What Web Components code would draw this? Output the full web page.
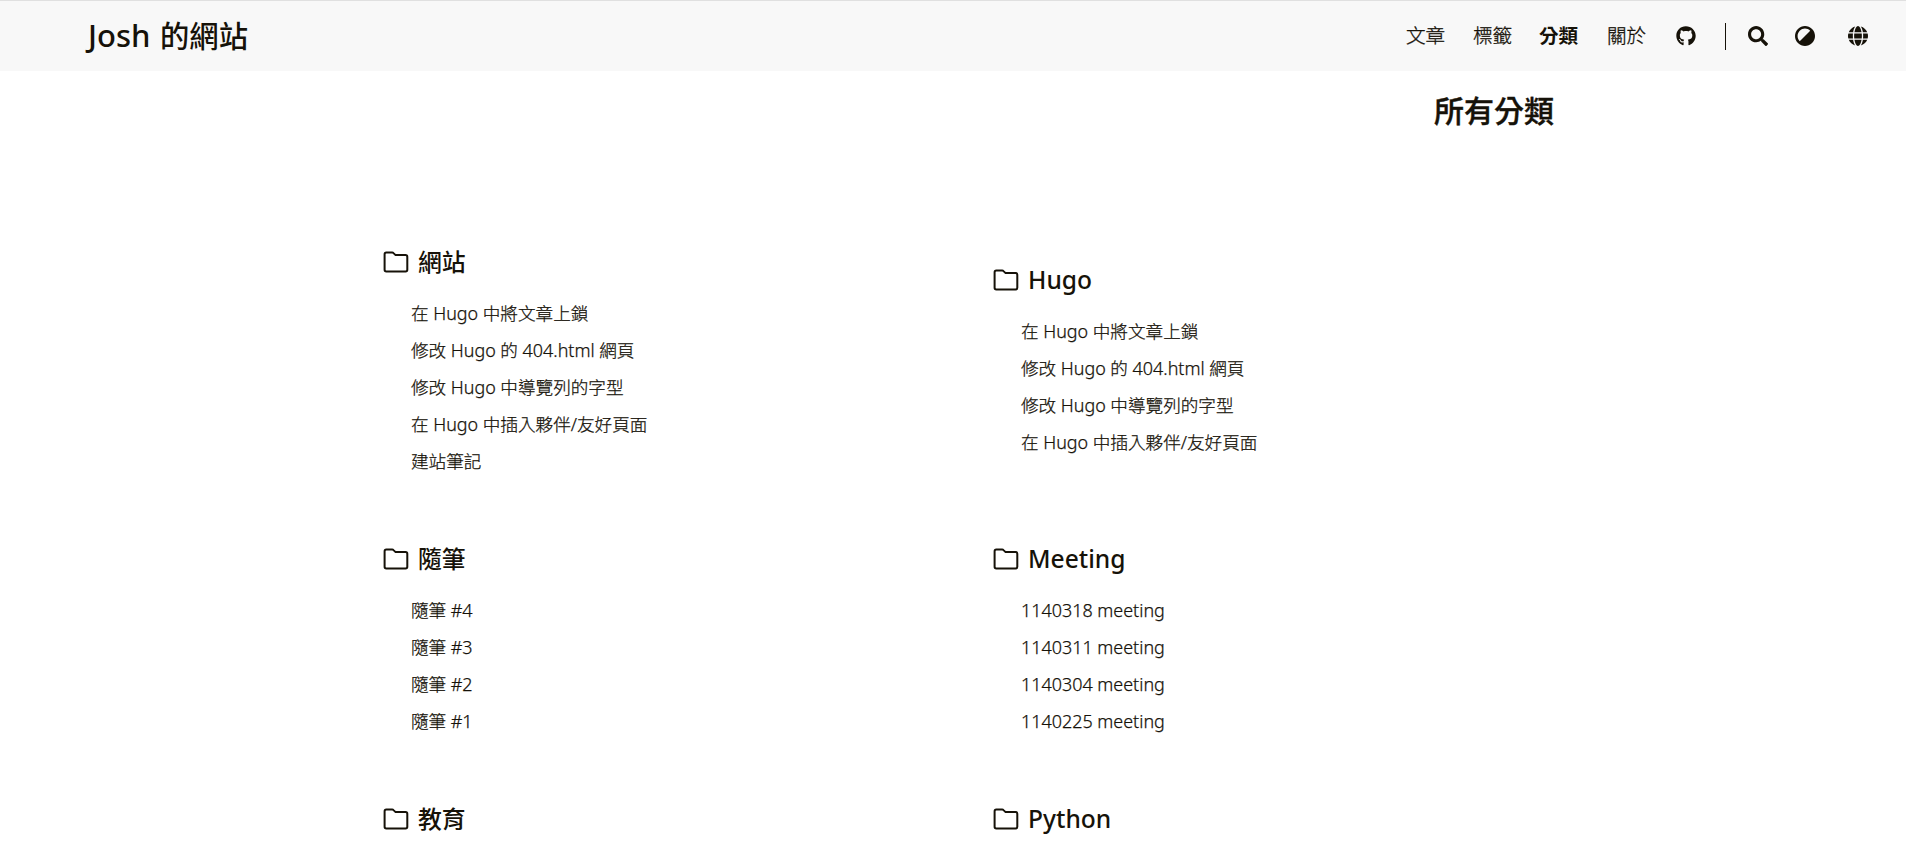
<!DOCTYPE html>
<html lang="zh-Hant">
<head>
<meta charset="utf-8">
<title>所有分類 - Josh 的網站</title>
<style>
  body { margin: 0; height: 858px; overflow: hidden; background: #fff; color: #161209; font-family: "Noto Sans", "Noto Sans CJK TC", sans-serif; }
</style>
</head>
<body>
<site-header>
  <span slot="brand"><latin-run style="--size:31px;margin-right:2px">Josh</latin-run> 的網站</span>
  <nav-link>文章</nav-link>
  <nav-link>標籤</nav-link>
  <nav-link active>分類</nav-link>
  <nav-link>關於</nav-link>
</site-header>
<page-title>所有分類</page-title>
<category-grid></category-grid>

<script>
const define = (name, html, setup) => customElements.define(name, class extends HTMLElement {
  constructor() {
    super();
    const t = document.createElement('template');
    t.innerHTML = html;
    this.attachShadow({ mode: 'open' }).append(t.content.cloneNode(true));
  }
  connectedCallback() { if (setup) setup(this); }
});

define('latin-run', `<style>:host{display:inline;font-size:var(--size,1.033em)}</style><slot></slot>`);

define('nav-link', `<style>
  :host{display:block;font-size:19.6px;font-weight:300;-webkit-text-stroke:.3px;line-height:30px;width:40px;white-space:nowrap}
  :host([active]){font-weight:700;-webkit-text-stroke:0;position:static;text-indent:-1px}
</style><slot></slot>`);

const icons = {
  github: ['0 0 496 512', '<path d="M165.9 397.4c0 2-2.3 3.6-5.2 3.6-3.3.3-5.6-1.3-5.6-3.6 0-2 2.3-3.6 5.2-3.6 3-.3 5.6 1.3 5.6 3.6zm-31.1-4.5c-.7 2 1.3 4.3 4.3 4.9 2.6 1 5.6 0 6.2-2s-1.3-4.3-4.3-5.2c-2.6-.7-5.5.3-6.2 2.3zm44.2-1.7c-2.9.7-4.9 2.6-4.6 4.9.3 2 2.9 3.3 5.9 2.6 2.9-.7 4.9-2.6 4.6-4.6-.3-1.9-3-3.2-5.9-2.9zM244.8 8C106.1 8 0 113.3 0 252c0 110.9 69.8 205.8 169.5 239.2 12.8 2.3 17.3-5.6 17.3-12.1 0-6.2-.3-40.4-.3-61.4 0 0-70 15-84.7-29.8 0 0-11.4-29.1-27.8-36.6 0 0-22.9-15.7 1.6-15.4 0 0 24.9 2 38.6 25.8 21.9 38.6 58.6 27.5 72.9 20.9 2.3-16 8.8-27.1 16-33.7-55.9-6.2-112.3-14.3-112.3-110.5 0-27.5 7.6-41.3 23.6-58.9-2.6-6.5-11.1-33.3 2.6-67.9 20.9-6.5 69 27 69 27 20-5.6 41.5-8.5 62.8-8.5s42.8 2.9 62.8 8.5c0 0 48.1-33.6 69-27 13.7 34.7 5.2 61.4 2.6 67.9 16 17.7 25.8 31.5 25.8 58.9 0 96.5-58.9 104.2-114.8 110.5 9.2 7.9 17 22.9 17 46.4 0 33.7-.3 75.4-.3 83.6 0 6.5 4.6 14.4 17.3 12.1C428.2 457.8 496 362.9 496 252 496 113.3 383.5 8 244.8 8z"/>'],
  search: ['0 0 512 512', '<path d="M505 442.7L405.3 343c-4.5-4.5-10.6-7-17-7H372c27.6-35.3 44-79.7 44-128C416 93.1 322.9 0 208 0S0 93.1 0 208s93.1 208 208 208c48.3 0 92.7-16.4 128-44v16.3c0 6.4 2.5 12.5 7 17l99.7 99.7c9.4 9.4 24.6 9.4 33.9 0l28.3-28.3c9.4-9.4 9.4-24.6.1-34zM208 336c-70.7 0-128-57.2-128-128 0-70.7 57.2-128 128-128 70.7 0 128 57.2 128 128 0 70.7-57.2 128-128 128z"/>'],
  contrast: ['8 8 496 496', '<path d="M8 256c0 136.966 111.033 248 248 248s248-111.034 248-248S392.966 8 256 8 8 119.033 8 256zm248 184V72c101.705 0 184 82.311 184 184 0 101.705-82.311 184-184 184z" transform="rotate(225 256 256)"/>'],
  globe: ['0 8 496 496', '<path d="M336.5 160C322 70.7 287.8 8 248 8s-74 62.7-88.5 152h177zM152 256c0 22.2 1.2 43.5 3.3 64h185.3c2.1-20.5 3.3-41.8 3.3-64s-1.2-43.5-3.3-64H155.3c-2.1 20.5-3.3 41.8-3.3 64zm324.7-96c-28.6-67.9-86.5-120.4-158-141.6 24.4 33.8 41.2 84.7 50 141.6h108zM177.2 18.4C105.8 39.6 47.8 92.1 19.3 160h108c8.7-56.9 25.5-107.8 49.9-141.6zM487.4 192H372.7c2.1 21 3.3 42.5 3.3 64s-1.2 43-3.3 64h114.6c5.5-20.5 8.6-41.8 8.6-64s-3.1-43.5-8.5-64zM120 256c0-21.5 1.2-43 3.3-64H8.6C3.2 212.5 0 233.8 0 256s3.2 43.5 8.6 64h114.6c-2-21-3.2-42.5-3.2-64zm39.5 96c14.5 89.3 48.7 152 88.5 152s74-62.7 88.5-152h-177zm159.3 141.6c71.4-21.2 129.4-73.7 158-141.6h-108c-8.8 56.9-25.6 107.8-50 141.6zM19.3 352c28.6 67.9 86.5 120.4 158 141.6-24.4-33.8-41.2-84.7-50-141.6h-108z"/>'],
  folder: ['0 0 26 22', '<path fill="none" stroke="currentColor" stroke-width="2" stroke-linejoin="round" d="M3.3 1.5H9.2Q10 1.5 10.5 2.1L12.6 4.1H22.6Q24.3 4.1 24.3 5.8V18.8Q24.3 20.5 22.6 20.5H3.3Q1.6 20.5 1.6 18.8V3.2Q1.6 1.5 3.3 1.5Z"/>']
};
define('site-icon', `<style>:host{display:block;width:20px;height:20px;flex:none}svg{display:block;width:100%;height:100%;fill:currentColor}</style><svg></svg>`, el => {
  const [box, body] = icons[el.getAttribute('name')];
  const svg = el.shadowRoot.querySelector('svg');
  svg.setAttribute('viewBox', box);
  svg.innerHTML = body;
});

define('site-header', `<style>
  :host{display:flex;box-sizing:border-box;height:71px;padding:0 38px 0 88px;border-top:1px solid #e0e0e0;background:#f8f8f8;align-items:center;justify-content:space-between}
  .brand{font-size:29.3px;font-weight:500;line-height:44px;margin-bottom:2px;white-space:nowrap}
  nav{display:flex;align-items:center}
  .links{display:flex;gap:27px;margin-right:29px}
  .line{width:1px;height:27px;background:#161209;margin:0 22px 0 29px}
</style>
<div class="brand"><slot name="brand"></slot></div>
<nav><div class="links"><slot></slot></div>
<site-icon name="github"></site-icon><div class="line"></div>
<site-icon name="search" style="margin-right:27px"></site-icon>
<site-icon name="contrast" style="margin:0 33px 0 0"></site-icon>
<site-icon name="globe"></site-icon></nav>`);

define('page-title', `<style>:host{display:block;margin:0 352px 0 0;padding-top:18px;height:155px;text-align:right}
h1{margin:0;font-size:30px;line-height:44px;font-weight:500;-webkit-text-stroke:.4px}</style><h1><slot></slot></h1>`);

define('category-card', `<style>
  :host{display:block;padding-bottom:61px}
  :host(:nth-last-of-type(-n+2)){padding-bottom:0}
  :host(:nth-last-of-type(-n+2)) h3{margin-bottom:0}
  h3{display:flex;align-items:center;gap:9px;height:36px;margin:0 0 15px;font-size:23.8px;line-height:36px;font-weight:500;white-space:nowrap}
  site-icon{width:26px;height:22px}
  ::slotted(post-link){margin-left:28px}
</style><h3><site-icon name="folder"></site-icon><slot name="title"></slot></h3><slot></slot>`);

define('post-link', `<style>:host{display:block;height:37px;line-height:37px;font-size:17.6px;font-weight:300;-webkit-text-stroke:.25px;--size:17.95px;white-space:nowrap}</style><slot></slot>`);

const hugoPosts = ['在 Hugo 中將文章上鎖', '修改 Hugo 的 404.html 網頁', '修改 Hugo 中導覽列的字型', '在 Hugo 中插入夥伴/友好頁面'];
const categories = [
  ['網站', [...hugoPosts, '建站筆記']],
  ['Hugo', hugoPosts],
  ['隨筆', ['隨筆 #4', '隨筆 #3', '隨筆 #2', '隨筆 #1']],
  ['Meeting', ['1140318 meeting', '1140311 meeting', '1140304 meeting', '1140225 meeting']],
  ['教育', []],
  ['Python', []]
];
const wrapLatin = s => s.replace(/[\x21-\x7e]+/g, '<latin-run>$&</latin-run>');
define('category-grid', `<style>
  :host{display:grid;grid-template-columns:610px 610px;align-items:center;padding-left:383px}
  category-card:nth-of-type(2){margin-top:-1px}
</style>`, el => {
  const t = document.createElement('template');
  t.innerHTML = categories.map(([name, posts]) =>
    `<category-card><span slot="title">${wrapLatin(name)}</span>${posts.map(p => `<post-link>${wrapLatin(p)}</post-link>`).join('')}</category-card>`).join('');
  el.shadowRoot.append(t.content.cloneNode(true));
});
</script>
</body>
</html>
